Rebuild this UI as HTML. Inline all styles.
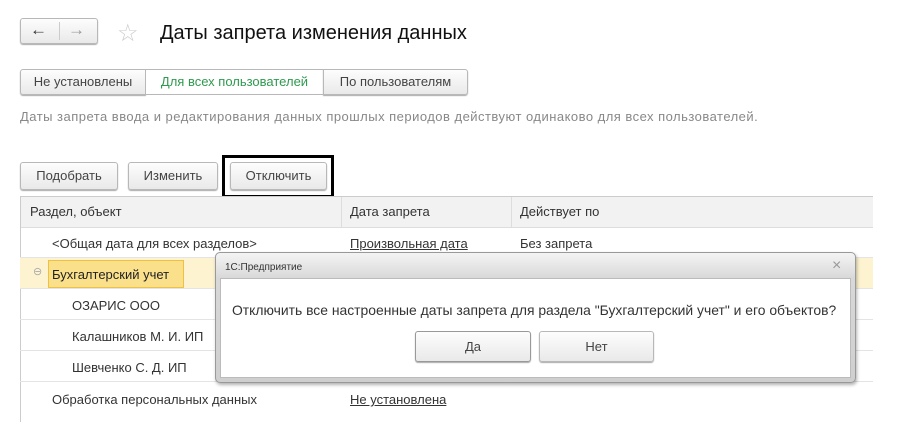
<!DOCTYPE html>
<html><head><meta charset="utf-8"><style>
*{box-sizing:border-box;margin:0;padding:0}
body{width:900px;height:422px;background:#fff;font-family:"Liberation Sans",Arial,sans-serif;color:#333;position:relative;overflow:hidden;font-size:13px}
.a{position:absolute}
.btn{position:absolute;border:1px solid #b8b8b8;border-radius:3px;background:linear-gradient(#fdfdfd,#e9e9e9);box-shadow:0 1px 1px #aaa;text-align:center;color:#444;font-size:13px}
.row{position:absolute;left:20px;width:853px;border-bottom:1px solid #e4e4e4;height:31px}
.u{text-decoration:underline}
</style></head><body>
<div class="btn" style="left:20px;top:18px;width:78px;height:26px"></div>
<div class="a" style="left:59px;top:22px;width:1px;height:18px;background:#ccc"></div>
<div class="a" style="left:30px;top:20px;font-size:17px;color:#333">&#8592;</div>
<div class="a" style="left:68px;top:20px;font-size:17px;color:#999">&#8594;</div>
<div class="a" style="left:117px;top:19px;font-size:24px;color:#ccc">&#9734;</div>
<div class="a" style="left:160px;top:22px;font-size:20px;color:#111">Даты запрета изменения данных</div>

<div class="btn" style="left:20px;top:69px;width:126px;height:26px;line-height:24px;border-radius:3px 0 0 3px">Не установлены</div>
<div class="a" style="left:145px;top:69px;width:179px;height:26px;line-height:24px;border:1px solid #b8b8b8;background:#fff;text-align:center;color:#2e9a4e">Для всех пользователей</div>
<div class="btn" style="left:323px;top:69px;width:145px;height:26px;line-height:24px;border-radius:0 3px 3px 0">По пользователям</div>
<div class="a" style="left:20px;top:109px;font-size:13px;letter-spacing:0.48px;color:#888">Даты запрета ввода и редактирования данных прошлых периодов действуют одинаково для всех пользователей.</div>

<div class="btn" style="left:20px;top:162px;width:98px;height:28px;line-height:26px">Подобрать</div>
<div class="btn" style="left:128px;top:162px;width:90px;height:28px;line-height:26px">Изменить</div>
<div class="a" style="left:222px;top:155px;width:112px;height:43px;border:3px solid #000"></div>
<div class="btn" style="left:230px;top:162px;width:97px;height:28px;line-height:26px">Отключить</div>

<div class="a" style="left:20px;top:196px;width:853px;height:32px;background:#f2f2f2;border-top:1px solid #ccc;border-bottom:1px solid #ddd"></div>
<div class="a" style="left:20px;top:196px;width:1px;height:226px;background:#ccc"></div>
<div class="a" style="left:341px;top:197px;width:1px;height:30px;background:#ddd"></div>
<div class="a" style="left:511px;top:197px;width:1px;height:30px;background:#ddd"></div>
<div class="a" style="left:30px;top:204px">Раздел, объект</div>
<div class="a" style="left:350px;top:204px">Дата запрета</div>
<div class="a" style="left:520px;top:204px">Действует по</div>

<div class="row" style="top:227px"></div>
<div class="a" style="left:52px;top:236px">&lt;Общая дата для всех разделов&gt;</div>
<div class="a u" style="left:350px;top:236px">Произвольная дата</div>
<div class="a" style="left:520px;top:236px">Без запрета</div>
<div class="row" style="top:258px;background:#fdf3d0"></div>
<div class="a" style="left:33px;top:265px;color:#aaa;font-size:11px">&#8854;</div>
<div class="a" style="left:48px;top:260px;width:136px;height:28px;background:#fbe08c;border:1px solid #f0c040"></div>
<div class="a" style="left:52px;top:267px;color:#222">Бухгалтерский учет</div>
<div class="row" style="top:289px"></div>
<div class="a" style="left:72px;top:298px">ОЗАРИС ООО</div>
<div class="row" style="top:320px"></div>
<div class="a" style="left:72px;top:329px">Калашников М. И. ИП</div>
<div class="row" style="top:351px"></div>
<div class="a" style="left:72px;top:360px">Шевченко С. Д. ИП</div>
<div class="a" style="left:52px;top:392px">Обработка персональных данных</div>
<div class="a u" style="left:350px;top:392px">Не установлена</div>

<div class="a" style="left:215px;top:252px;width:641px;height:131px;border:1px solid #999;border-radius:5px;background:linear-gradient(#f4f4f4,#d8d8d8 20%,#cfcfcf);box-shadow:1px 2px 3px rgba(0,0,0,.3)"></div>
<div class="a" style="left:225px;top:262px;font-size:10px;color:#333">1С:Предприятие</div>
<div class="a" style="left:832px;top:257px;font-size:16px;color:#999">&#215;</div>
<div class="a" style="left:220px;top:278px;width:631px;height:100px;background:#fff;border:1px solid #bbb"></div>
<div class="a" style="left:232px;top:302px;font-size:13.9px;color:#333">Отключить все настроенные даты запрета для раздела "Бухгалтерский учет" и его объектов?</div>
<div class="btn" style="left:415px;top:331px;width:116px;height:31px;line-height:29px;border-color:#999">Да</div>
<div class="btn" style="left:539px;top:331px;width:115px;height:31px;line-height:29px">Нет</div>
</body></html>
